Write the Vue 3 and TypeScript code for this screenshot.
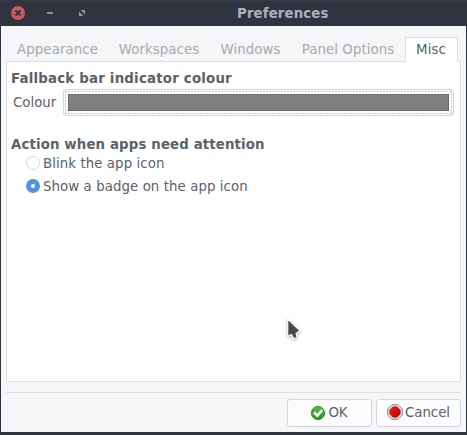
<script setup lang="ts">
import { ref } from 'vue'

interface Tab { label: string; width: number }

const tabs: Tab[] = [
  { label: 'Appearance', width: 103 },
  { label: 'Workspaces', width: 102 },
  { label: 'Windows', width: 81 },
  { label: 'Panel Options', width: 114 },
  { label: 'Misc', width: 53 },
]
const activeTab = ref('Misc')
const attention = ref('badge')
const attentionOptions = [
  { value: 'blink', label: 'Blink the app icon' },
  { value: 'badge', label: 'Show a badge on the app icon' },
]
</script>

<template>
  <div class="window">
    <header class="titlebar">
      <svg class="controls" width="100" height="26" viewBox="0 0 100 26">
        <circle cx="18" cy="13" r="7" fill="#cc575d" />
        <path d="M15.5 10.5l5 5m0-5l-5 5" stroke="#2f343f" stroke-width="1.8" />
        <path d="M47 12h6v2h-6z" fill="#90939b" />
        <path d="M80.5 10H85v4.5zM79 11.5V16h4.5z" fill="#90939b" />
      </svg>
      <span class="title">Preferences</span>
    </header>

    <main class="content">
      <nav class="tabs">
        <div
          v-for="tab in tabs"
          :key="tab.label"
          class="tab"
          :class="{ active: tab.label === activeTab }"
          :style="{ width: tab.width + 'px' }"
          @click="activeTab = tab.label"
        >{{ tab.label }}</div>
      </nav>

      <section class="page">
        <h2>Fallback bar indicator colour</h2>
        <div class="colour-row">
          <span class="colour-label">Colour</span>
          <div class="colour-button">
            <div class="focus"><div class="swatch"></div></div>
          </div>
        </div>
        <h2 class="second">Action when apps need attention</h2>
        <div
          v-for="option in attentionOptions"
          :key="option.value"
          class="radio-row"
          @click="attention = option.value"
        >
          <span class="radio" :class="{ checked: attention === option.value }"></span>
          <span class="radio-label">{{ option.label }}</span>
        </div>
      </section>

      <footer class="actions">
        <div class="button">
          <svg class="icon" width="16" height="16" viewBox="0 0 16 16">
            <defs>
              <linearGradient id="green" x1="0" y1="0" x2="0" y2="1">
                <stop offset="0" stop-color="#55bd42" />
                <stop offset="1" stop-color="#259720" />
              </linearGradient>
            </defs>
            <circle cx="8" cy="8" r="6.6" fill="url(#green)" stroke="#2b8922" stroke-width="0.9" />
            <path d="M4.2 7.5l3.1 3.2 4.9-5.5" fill="none" stroke="#fff" stroke-width="2.6" />
          </svg>
          <span>OK</span>
        </div>
        <div class="button wide-label">
          <svg class="icon cancel" width="16" height="16" viewBox="0 0 16 16">
            <defs>
              <linearGradient id="red" x1="0" y1="0" x2="1" y2="1">
                <stop offset="0" stop-color="#f02020" />
                <stop offset="1" stop-color="#b80000" />
              </linearGradient>
            </defs>
            <path d="M5 .7h6L15.3 5v6L11 15.3H5L.7 11V5z" fill="#e9eae4" stroke="#85877f" />
            <path d="M6 2.7h4L13.3 6v4L10 13.3H6L2.7 10V6z" fill="url(#red)" stroke="#ad1010" stroke-width=".6" />
          </svg>
          <span>Cancel</span>
        </div>
      </footer>
    </main>

    <svg class="pointer" width="22" height="28" viewBox="0 0 22 28">
      <path d="M4.7 3.7v17.6l3.9-1.7 2.2 4.2 3.5-1.6-1.3-3.8 4-2.6z" fill="#494949" stroke="#fff" stroke-width="1.2" stroke-linejoin="round" />
    </svg>
  </div>
</template>

<style>
body {
  margin: 0;
  background: #2f343f;
}
</style>

<style scoped>
.window {
  position: relative;
  box-sizing: border-box;
  width: 467px;
  height: 435px;
  padding: 0 1px 3px;
  background: #2f343f;
  color: #5c616c;
  font: 13.333px/16px "DejaVu Sans", sans-serif;
  cursor: default;
}
.titlebar {
  display: grid;
  grid-template-columns: 236px 1fr;
  height: 26px;
  margin: 0 -1px;
  box-shadow: inset 0 1px #353b48;
}
.title {
  padding-left: 1px;
  font-weight: bold;
  letter-spacing: 0.12px;
  line-height: 28px;
  color: #a9b1be;
}
.content {
  box-sizing: border-box;
  height: 406px;
  padding: 11px 5px 0;
  background: #f5f6f7;
}
.tabs {
  position: relative;
  z-index: 1;
  display: flex;
  height: 25px;
}
.tab {
  box-sizing: border-box;
  height: 24px;
  text-align: center;
  letter-spacing: 0.08px;
  line-height: 26px;
  white-space: nowrap;
  color: #a6a9b0;
}
.tab:first-child {
  margin-right: -1px;
}
.tab.active {
  height: 25px;
  padding-right: 1px;
  border: 1px solid #dcdfe3;
  border-bottom: 0;
  background: #fff;
  color: #5c616c;
  line-height: 23px;
}
.page {
  box-sizing: border-box;
  height: 321px;
  margin-top: -1px;
  padding: 9px 6px 0 4px;
  border: 1px solid #dcdfe3;
  background: #fff;
}
h2 {
  margin: 0;
  font-size: 13.333px;
  letter-spacing: 0.21px;
  line-height: 16px;
}
.colour-row {
  display: flex;
  height: 27px;
  margin-top: 2px;
}
.colour-label {
  width: 50px;
  padding-left: 2px;
  line-height: 27px;
}
.colour-button {
  box-sizing: border-box;
  flex: 1;
  padding: 1px;
  border: 1px solid #cfd6e6;
  border-radius: 3px;
}
.focus {
  --dash: #c6c8cc 0 2px, transparent 2px 3px;
  box-sizing: border-box;
  height: 23px;
  padding: 3px;
  background:
    repeating-linear-gradient(90deg, var(--dash)) top / 100% 1px no-repeat,
    repeating-linear-gradient(90deg, var(--dash)) bottom / 100% 1px no-repeat,
    repeating-linear-gradient(var(--dash)) left / 1px 100% no-repeat,
    repeating-linear-gradient(var(--dash)) right / 1px 100% no-repeat;
}
.swatch {
  box-sizing: border-box;
  height: 17px;
  border: 1px solid #6b6b6b;
  background: #808080;
}
.second {
  margin-top: 21px;
  letter-spacing: 0.13px;
}
.radio-row {
  display: flex;
  align-items: center;
  gap: 3px;
  height: 23px;
  padding-left: 15px;
}
.second + .radio-row {
  margin-top: -2px;
}
.radio {
  box-sizing: border-box;
  width: 14px;
  height: 14px;
  border: 1px solid #cfd6e6;
  border-radius: 50%;
}
.radio.checked {
  border: 5px solid #5294e2;
}
.radio-label {
  padding-top: 2px;
  letter-spacing: 0.08px;
}
.actions {
  display: flex;
  justify-content: flex-end;
  gap: 4px;
  margin-top: 10px;
  padding-top: 6px;
  border-top: 1px solid #dcdfe3;
}
.button {
  display: flex;
  box-sizing: border-box;
  align-items: center;
  justify-content: center;
  gap: 2px;
  width: 85px;
  height: 28px;
  padding-right: 1px;
  border: 1px solid #cfd6e6;
  border-radius: 3px;
  background: #fcfcfd;
}
.wide-label {
  padding-right: 0;
}
.icon {
  margin-top: -1px;
}
.cancel {
  margin-top: -2px;
}
.pointer {
  position: absolute;
  left: 283px;
  top: 315px;
  filter: drop-shadow(0 1px 1px rgb(0 0 0 / 35%));
}
</style>
